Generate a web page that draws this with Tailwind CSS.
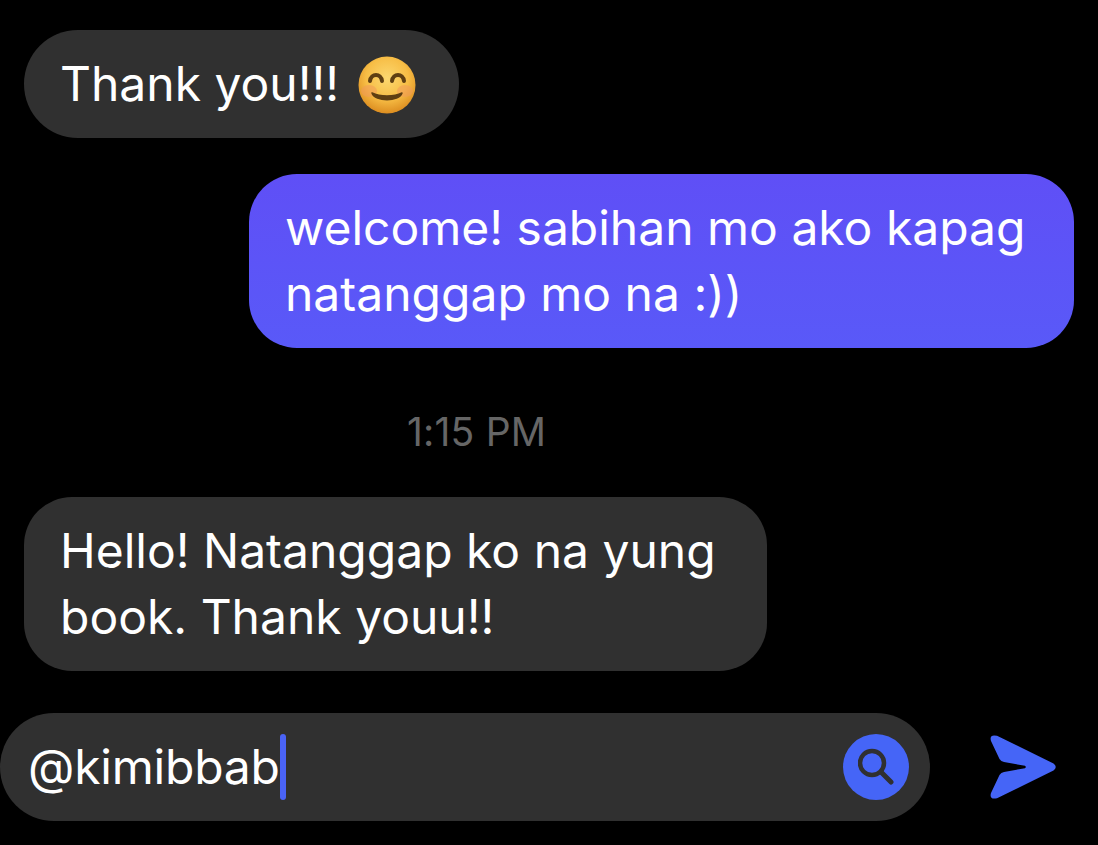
<!DOCTYPE html>
<html lang="en">
<head>
    <meta charset="UTF-8">
    <title>Chat</title>
    <script src="https://cdn.jsdelivr.net/npm/@tailwindcss/browser@4"></script>
</head>
<body class="bg-black w-[1098px] h-[845px] overflow-hidden font-['Inter',sans-serif] text-white">
    <div class="flex flex-col pt-[30px]">
        <!-- Messages -->
        <div class="ml-[24px] w-[435px] h-[108px] rounded-[54px] bg-[#303030] pl-[36px] flex items-center text-[48px]">
            <span>Thank you!!!</span>
            <svg class="ml-[18px] mt-[2px]" width="60" height="60" viewBox="0 0 60 60">
                <defs>
                    <radialGradient id="face" cx="50%" cy="38%" r="62%">
                        <stop offset="0%" stop-color="#fcd870"/>
                        <stop offset="60%" stop-color="#f7bd45"/>
                        <stop offset="100%" stop-color="#dc8d20"/>
                    </radialGradient>
                </defs>
                <circle cx="30" cy="30" r="28.5" fill="url(#face)"/>
                <ellipse cx="12" cy="36" rx="8" ry="6" fill="#f09a5a" opacity="0.55"/>
                <ellipse cx="48" cy="36" rx="8" ry="6" fill="#f09a5a" opacity="0.55"/>
                <path d="M13 26c1-8 11-8 12 0M35 26c1-8 11-8 12 0" fill="none" stroke="#5f3f12" stroke-width="4" stroke-linecap="round"/>
                <path d="M15 38c8 4 22 4 30 0c-3 9-27 9-30 0z" fill="#5f3f12" stroke="#5f3f12" stroke-width="1.5" stroke-linejoin="round"/>
            </svg>
        </div>

        <div class="self-end mr-[24px] mt-[36px] w-[825px] h-[174px] rounded-[48px] bg-linear-to-b from-[#5f4ff6] to-[#5959f8] pl-[36px] pt-[21px] text-[48px] leading-[66px]">
            <p>welcome! sabihan mo ako kapag</p>
            <p>natanggap mo na :))</p>
        </div>

        <div class="mt-[64px] pl-[407px] text-[39px] leading-[40px] tracking-[0.2px] text-[#666666]">1:15 PM</div>

        <div class="ml-[24px] mt-[45px] w-[743px] h-[174px] rounded-[48px] bg-[#303030] pl-[36px] pt-[21px] text-[48px] leading-[66px]">
            <p>Hello! Natanggap ko na yung</p>
            <p>book. Thank youu!!</p>
        </div>

        <!-- Input row -->
        <div class="mt-[42px] flex items-center">
            <div class="w-[930px] h-[108px] rounded-[54px] bg-[#303030] pl-[28px] pr-[21px] flex items-center justify-between">
                <div class="flex items-center text-[48px] tracking-[-0.2px]">
                    <span>@kimibbab</span>
                    <span class="w-[6px] h-[66px] rounded-full bg-[#4a63f5]"></span>
                </div>
                <div class="w-[66px] h-[66px] rounded-full bg-[#4565f7] flex items-center justify-center">
                    <svg width="36" height="38" viewBox="0 0 36 38" fill="none" stroke="#303030" stroke-linecap="round">
                        <circle cx="14" cy="15" r="12" stroke-width="4.5"/>
                        <path d="M23 24l10 10" stroke-width="5"/>
                    </svg>
                </div>
            </div>
            <svg class="ml-[59px]" width="68" height="68" viewBox="0 0 68 68">
                <path d="M8 2.8 L64.5 30.5 Q69 34 64.5 37.5 L8 65.2 Q0 67 2 60 L10.5 42 Q12 39.5 15 39 L36 35.2 L37 34 L36 32.8 L15 29 Q12 28.5 10.5 26 L2 8 Q0 1 8 2.8 Z" fill="#4565f7"/>
            </svg>
        </div>
    </div>
</body>
</html>
